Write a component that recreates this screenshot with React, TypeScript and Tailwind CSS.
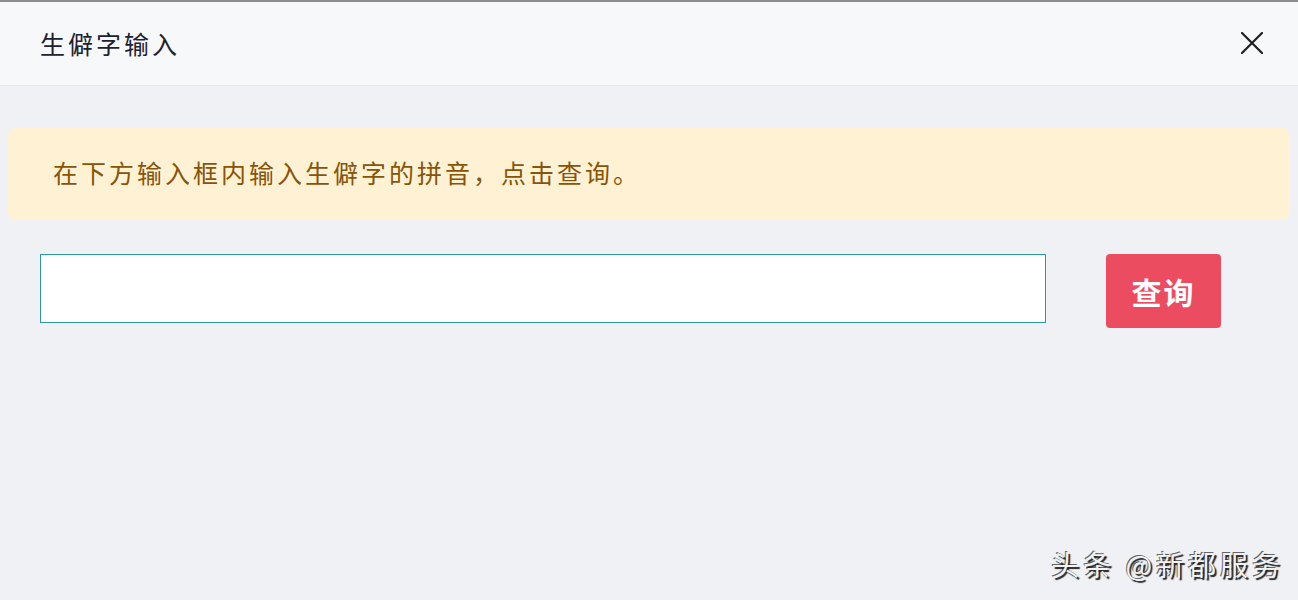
import { useState } from "react";

const cjk = "font-['Microsoft_YaHei','Noto_Sans_CJK_SC',sans-serif]";

function CloseIcon() {
  return (
    <svg width="22" height="22" viewBox="0 0 22 22" fill="none">
      <path d="M1 1L21 21M21 1L1 21" stroke="#1f1f1f" strokeWidth="2.2" strokeLinecap="round" />
    </svg>
  );
}

function App() {
  const [pinyin, setPinyin] = useState("");

  return (
    <div className={`relative w-[1298px] h-[600px] bg-[#eff1f4] border-t-2 border-[#8e8e8e] flex flex-col overflow-hidden ${cjk}`}>
      {/* header */}
      <div className="h-[84px] shrink-0 bg-[#f7f8fa] border-b border-[#e6e8ec] flex items-center justify-between pl-[40px] pr-[35px]">
        <div className="text-[25px] leading-none tracking-[3px] text-[#1e2130]">生僻字输入</div>
        <button className="w-[22px] h-[22px] flex items-center justify-center -mt-[1px]">
          <CloseIcon />
        </button>
      </div>

      {/* body */}
      <div className="flex-1 px-[8px] pt-[42px]">
        <div className="h-[92px] rounded-[8px] bg-[#fff2d4] flex items-center pl-[45px]">
          <span className="text-[25px] leading-none tracking-[3px] text-[#875408] -mt-[3px]">
            在下方输入框内输入生僻字的拼音，点击查询。
          </span>
        </div>

        <div className="mt-[34px] flex items-start pl-[32px]">
          <input
            value={pinyin}
            onChange={(e) => setPinyin(e.target.value)}
            className="w-[1006px] h-[69px] bg-white border border-[#2b9aa0] outline-none px-3 text-[22px]"
          />
          <button className="ml-[60px] w-[115px] h-[74px] rounded-[4px] bg-[#ec4c5f] text-white text-[30px] font-bold leading-none tracking-[2px]">
            查询
          </button>
        </div>
      </div>

      {/* watermark */}
      <div className="absolute right-[14px] bottom-[22px] text-[28px] leading-none text-[#f2f2f2] tracking-[4px] [text-shadow:2px_2px_1px_#222,-1px_-1px_0_#666]">
        头条 @新都服务
      </div>
    </div>
  );
}

export default App;
